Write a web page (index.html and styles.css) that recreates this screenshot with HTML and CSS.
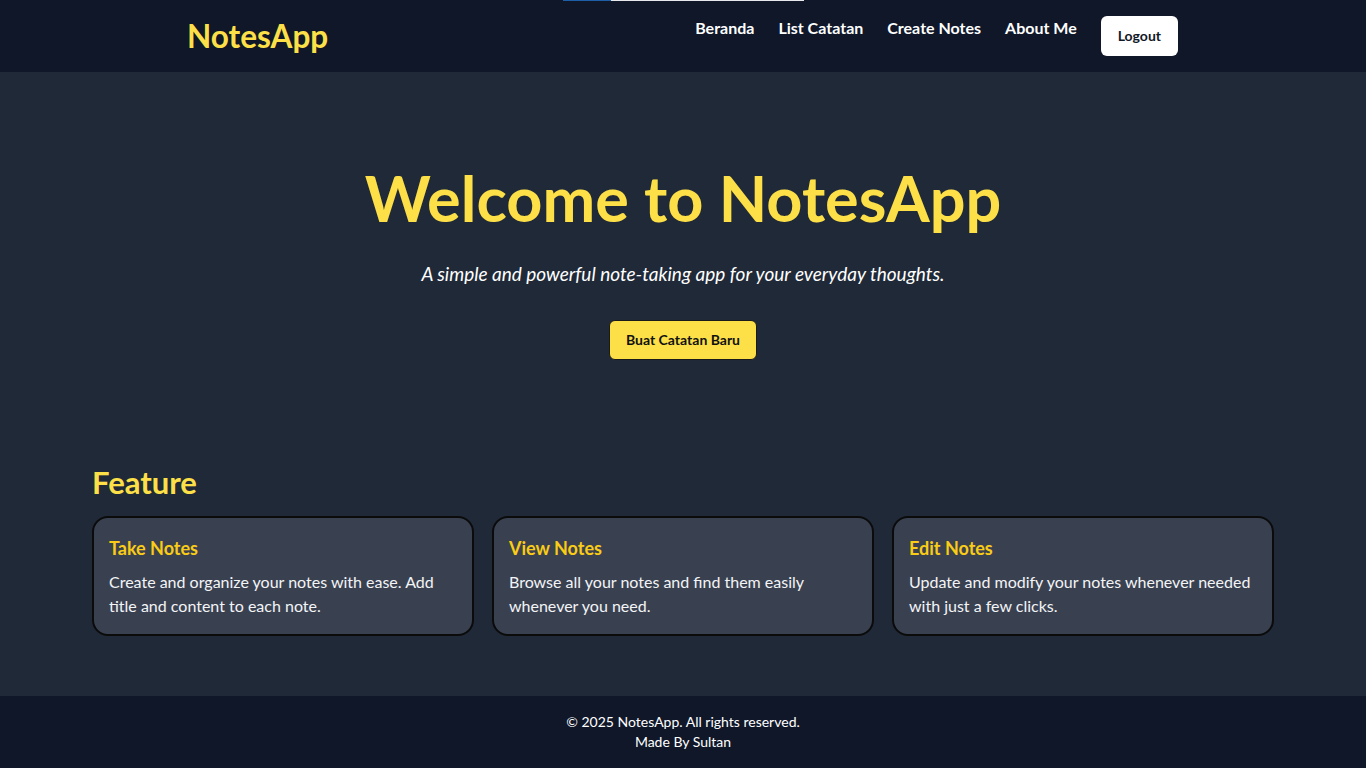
FILE: index.html
```html
<!DOCTYPE html>
<html lang="id">
<head>
<meta charset="utf-8">
<title>NotesApp</title>
<link rel="stylesheet" href="styles.css">
</head>
<body>
<div class="load-strip"><span class="load-strip-done"></span><span class="load-strip-rest"></span></div>
<header class="site-header">
  <div class="header-inner">
    <a class="logo" href="#">NotesApp</a>
    <nav class="main-nav">
      <a class="nav-link" href="#">Beranda</a>
      <a class="nav-link" href="#">List Catatan</a>
      <a class="nav-link" href="#">Create Notes</a>
      <a class="nav-link" href="#">About Me</a>
      <button class="logout-btn" type="button">Logout</button>
    </nav>
  </div>
</header>
<main class="main">
  <section class="hero">
    <h1 class="hero-title">Welcome to NotesApp</h1>
    <p class="hero-sub">A simple and powerful note-taking app for your everyday thoughts.</p>
    <a class="hero-btn" href="#">Buat Catatan Baru</a>
  </section>
  <section class="features">
    <h2 class="features-title">Feature</h2>
    <div class="feature-grid">
      <div class="feature-card">
        <h3 class="feature-name">Take Notes</h3>
        <p class="feature-text">Create and organize your notes with ease. Add title and content to each note.</p>
      </div>
      <div class="feature-card">
        <h3 class="feature-name">View Notes</h3>
        <p class="feature-text">Browse all your notes and find them easily whenever you need.</p>
      </div>
      <div class="feature-card">
        <h3 class="feature-name">Edit Notes</h3>
        <p class="feature-text">Update and modify your notes whenever needed with just a few clicks.</p>
      </div>
    </div>
  </section>
</main>
<footer class="site-footer">
  <p class="footer-line">© 2025 NotesApp. All rights reserved.</p>
  <p class="footer-line">Made By Sultan</p>
</footer>
</body>
</html>
```

FILE: styles.css
```css
* { box-sizing: border-box; }
html, body { margin: 0; padding: 0; }
body {
  font-family: Lato, "Noto Sans", "Liberation Sans", sans-serif;
  background: #202938;
  color: #ffffff;
}
a { text-decoration: none; color: inherit; }
h1, h2, h3, p { margin: 0; }

.load-strip {
  position: absolute;
  top: 0;
  left: 563px;
  display: flex;
  height: 1px;
  z-index: 10;
}
.load-strip-done { width: 48px; background: #1d5fa6; }
.load-strip-rest { width: 193px; background: #e6e8ec; }

.site-header {
  background: #0f1729;
  height: 72px;
}
.header-inner {
  max-width: 1024px;
  margin: 0 auto;
  padding: 16px 16px;
  display: flex;
  align-items: center;
  justify-content: space-between;
}
.logo {
  font-size: 31.5px;
  line-height: 36px;
  font-weight: 700;
  color: #fde047;
  margin-left: 0;
}
.main-nav {
  display: flex;
  align-items: flex-start;
  gap: 24px;
  margin-right: 1px;
}
.nav-link {
  font-size: 16px;
  line-height: 24px;
  font-weight: 700;
  color: #ffffff;
}
.logout-btn {
  font-family: inherit;
  font-size: 14px;
  font-weight: 700;
  line-height: 20px;
  height: 40px;
  padding: 10px 17px;
  background: #ffffff;
  color: #111827;
  border: none;
  border-radius: 6px;
}

.hero {
  padding: 95px 16px 104px;
  text-align: center;
}
.hero-title {
  font-size: 63px;
  line-height: 62px;
  font-weight: 700;
  color: #fde047;
  margin-bottom: 31px;
}
.hero-sub {
  font-size: 19px;
  line-height: 28px;
  font-style: italic;
  color: #ffffff;
  margin-bottom: 32px;
}
.hero-btn {
  display: inline-block;
  font-size: 14px;
  line-height: 20px;
  font-weight: 700;
  color: #111111;
  background: #fde047;
  border: 1px solid #1a1a1a;
  border-radius: 6px;
  padding: 9px 16px;
  height: 40px;
}

.features {
  max-width: 1182px;
  margin: 0 auto;
  padding-bottom: 60px;
}
.features-title {
  font-size: 31px;
  line-height: 36px;
  font-weight: 700;
  color: #fde047;
  margin-bottom: 16px;
}
.feature-grid {
  display: grid;
  grid-template-columns: repeat(3, 1fr);
  gap: 18px;
}
.feature-card {
  background: #394151;
  border: 2px solid #0b0b0b;
  border-radius: 16px;
  padding: 16px 15px;
}
.feature-name {
  font-size: 18px;
  line-height: 28px;
  font-weight: 700;
  color: #facc15;
  margin-bottom: 8px;
}
.feature-text {
  font-size: 16px;
  line-height: 24px;
  color: #f3f4f6;
}

.site-footer {
  background: #0f1729;
  padding: 16px;
  text-align: center;
}
.footer-line {
  font-size: 14px;
  line-height: 20px;
  color: #ffffff;
}
```
